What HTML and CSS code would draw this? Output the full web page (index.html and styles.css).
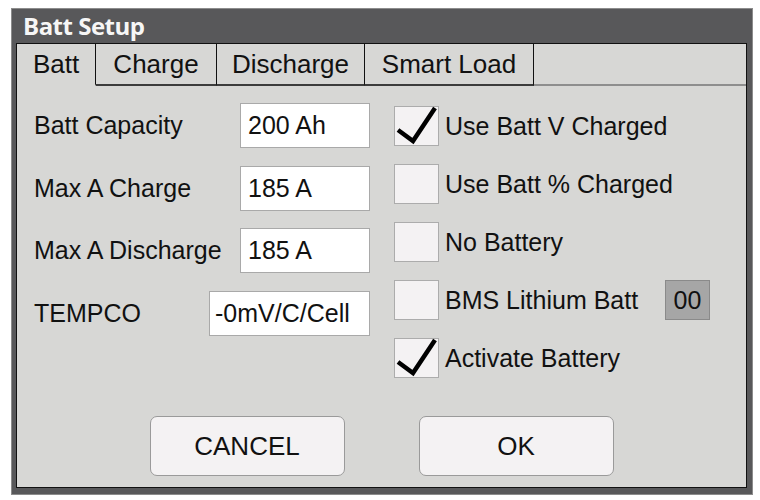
FILE: index.html
```html
<!DOCTYPE html>
<html lang="en">
<head>
	<meta charset="UTF-8">
	<title>Batt Setup</title>
	<link rel="stylesheet" href="styles.css">
</head>
<body>
<div class="window">
    <div class="title">Batt Setup</div>
    <div class="panel">
        <div class="tabs">
            <span class="tab on t-batt">Batt</span>
            <span class="tab t-charge">Charge</span>
            <span class="tab t-dis">Discharge</span>
            <span class="tab t-smart">Smart Load</span>
            <span class="tab-fill"></span>
        </div>
        <div class="form">
            <div class="fields">
                <div class="row">
                    <span class="label">Batt Capacity</span>
                    <span class="input">200 Ah</span>
                </div>
                <div class="row">
                    <span class="label">Max A Charge</span>
                    <span class="input">185 A</span>
                </div>
                <div class="row">
                    <span class="label">Max A Discharge</span>
                    <span class="input">185 A</span>
                </div>
                <div class="row">
                    <span class="label">TEMPCO</span>
                    <span class="input wide">-0mV/C/Cell</span>
                </div>
            </div>
            <div class="checks">
                <div class="check">
                    <span class="box"><svg width="45" height="40" viewBox="0 0 45 40"><polyline points="4,24 19,35 41,2" fill="none" stroke="#000" stroke-width="4.5"/></svg></span>
                    <span>Use Batt V Charged</span>
                </div>
                <div class="check">
                    <span class="box"></span>
                    <span>Use Batt % Charged</span>
                </div>
                <div class="check">
                    <span class="box"></span>
                    <span>No Battery</span>
                </div>
                <div class="check">
                    <span class="box"></span>
                    <span class="bms">BMS Lithium Batt</span>
                    <span class="code">00</span>
                </div>
                <div class="check">
                    <span class="box"><svg width="45" height="40" viewBox="0 0 45 40"><polyline points="4,24 19,35 41,2" fill="none" stroke="#000" stroke-width="4.5"/></svg></span>
                    <span>Activate Battery</span>
                </div>
            </div>
        </div>
        <div class="buttons">
            <span class="btn">CANCEL</span>
            <span class="btn">OK</span>
        </div>
    </div>
</div>
</body>
</html>
```

FILE: styles.css
```css
*
{
    margin: 0;
    padding: 0;
    box-sizing: border-box;
}
body
{
    padding: 8px 0 0 11px;
    background: #fff;
    font-family: "Liberation Sans", Arial, sans-serif;
    color: #111;
}
.window
{
    display: flex;
    flex-direction: column;
    width: 742px;
    height: 487px;
    padding: 0 5px 6px 4px;
    border: 1px solid #8c8c8c;
    background: #58585a;
}
.title
{
    height: 34px;
    padding-left: 7px;
    font-family: "Open Sans", sans-serif;
    font-size: 24px;
    font-weight: bold;
    line-height: 33px;
    letter-spacing: -0.5px;
    color: #f6f6f6;
}
.panel
{
    flex: 1;
    display: flex;
    flex-direction: column;
    border: 1px solid #111;
    background: #d7d7d5;
}
.tabs
{
    display: flex;
    height: 42px;
}
.tab
{
    font-size: 26px;
    line-height: 40px;
    text-align: center;
    border-right: 1px solid #111;
    border-bottom: 2px solid #3c3c3c;
}
.t-batt
{
    width: 79px;
}
.t-charge
{
    width: 121px;
}
.t-dis
{
    width: 148px;
}
.t-smart
{
    width: 169px;
}
.tab.on
{
    border-bottom-color: transparent;
}
.tab-fill
{
    flex: 1;
    border-bottom: 2px solid #8e8e8e;
}
.form
{
    display: flex;
    gap: 24px;
    padding: 17px 0 0 17px;
    font-size: 25px;
}
.fields
{
    display: flex;
    flex-direction: column;
    gap: 17.7px;
    width: 336px;
}
.row
{
    display: flex;
    align-items: center;
    justify-content: space-between;
    height: 45px;
}
.input
{
    width: 130px;
    height: 45px;
    padding-left: 7px;
    line-height: 43px;
    background: #fff;
    border: 1px solid #a9a9a9;
}
.input.wide
{
    width: 161px;
    padding-left: 5px;
}
.checks
{
    display: flex;
    flex-direction: column;
    gap: 18px;
    padding-top: 3px;
}
.check
{
    display: flex;
    align-items: center;
    gap: 6px;
    height: 40px;
}
.box
{
    width: 45px;
    height: 40px;
    background: #f4f2f3;
    border: 1px solid #acacac;
}
.box svg
{
    display: block;
    margin: -1px 0 0 -1px;
}
.bms
{
    width: 214px;
}
.code
{
    width: 45px;
    height: 40px;
    line-height: 38px;
    text-align: center;
    background: #a6a6a6;
    border: 1px solid #8a8a8a;
}
.buttons
{
    display: flex;
    justify-content: center;
    gap: 74px;
    margin-top: auto;
    padding-bottom: 11px;
}
.btn
{
    width: 195px;
    height: 60px;
    line-height: 58px;
    text-align: center;
    font-size: 26px;
    background: #f4f2f3;
    border: 1px solid #9a9a9a;
    border-radius: 7px;
}
```
